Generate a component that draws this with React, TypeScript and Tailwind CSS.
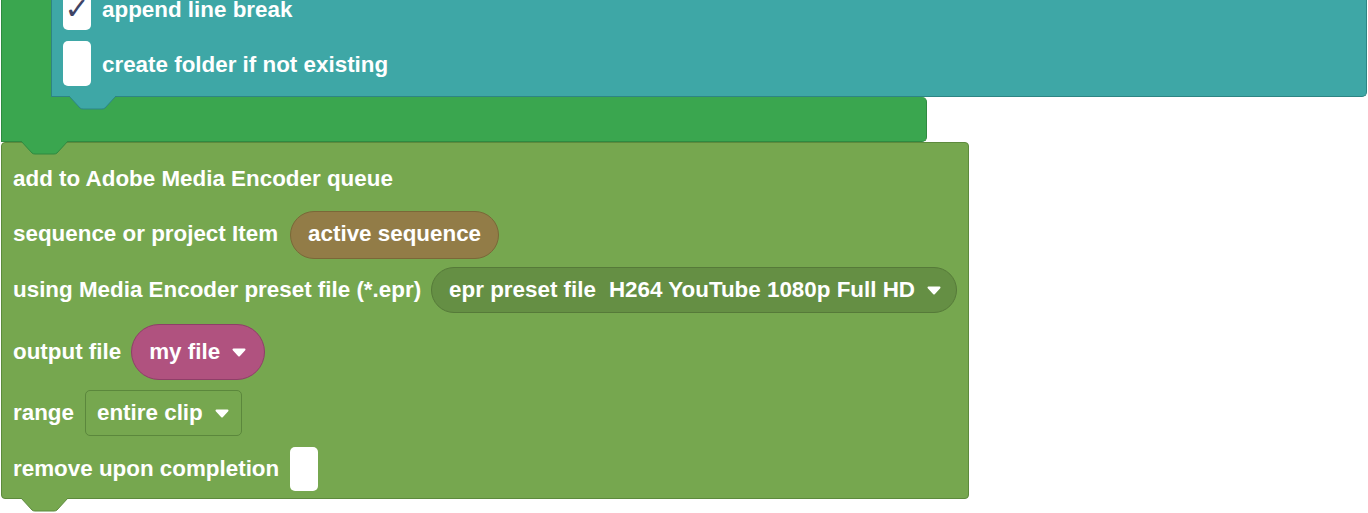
import React from "react";

function Notch({ fill, stroke, className }: { fill: string; stroke: string; className: string }) {
  return (
    <svg width="49" height="14" viewBox="0 0 49 14" className={className}>
      <path d="M0 0 L1 0 L12 12 Q13 13 15 13 L34 13 Q36 13 37 12 L48 0 L49 0 Z" fill={fill} />
      <path d="M1 0 L12 12 Q13 13 15 13 L34 13 Q36 13 37 12 L48 0" fill="none" stroke={stroke} strokeWidth="1" />
    </svg>
  );
}

function Arrow() {
  return (
    <svg width="14" height="9" viewBox="0 0 14 9" className="shrink-0">
      <path d="M1.5 1.5 L12.5 1.5 L7 7.5 Z" fill="#ffffff" stroke="#ffffff" strokeWidth="2" strokeLinejoin="round" />
    </svg>
  );
}

function Checkbox({ checked }: { checked?: boolean }) {
  return (
    <div className="w-[28px] h-[44px] bg-white rounded-[5px] flex items-center justify-center shrink-0">
      {checked && (
        <span className="text-[#3f4466] text-[30px] leading-none font-['DejaVu_Sans',sans-serif] font-bold mt-[2px]">✓</span>
      )}
    </div>
  );
}

export default function App() {
  return (
    <div className="w-[1368px] h-[513px] overflow-hidden bg-white font-['Liberation_Sans',Arial,sans-serif] font-bold text-white text-[22.4px] leading-none">
      <div className="-mt-[25px] flex flex-col items-start pl-[1px]">
        {/* green C-block */}
        <div className="flex flex-col items-start">
          <div className="flex">
            <div className="w-[50px] bg-[#3aa64f] border-l border-[#2f8a41]" />
            <div className="relative w-[1316px] bg-[#3ea7a6] border-l border-r border-b border-[#2d8584] rounded-br-[5px] pt-[11px] pb-[10px] pl-[11px] flex flex-col gap-[11px]">
              <div className="flex items-center gap-[11px]">
                <Checkbox checked />
                <span className="pt-[4px]">append line break</span>
              </div>
              <div className="flex items-center gap-[11px]">
                <div className="w-[28px] h-[45px] bg-white rounded-[5px] shrink-0" />
                <span className="pt-[4px]">create folder if not existing</span>
              </div>
              <Notch fill="#3ea7a6" stroke="#2d8584" className="absolute left-[16px] top-full z-10" />
            </div>
          </div>
          <div className="relative h-[45px] w-[926px] bg-[#3aa64f] border-l border-r border-b border-[#2f8a41] rounded-r-[5px]">
            <Notch fill="#3aa64f" stroke="#2f8a41" className="absolute left-[18px] top-full z-10" />
          </div>
        </div>

        {/* olive block */}
        <div className="relative w-[968px] bg-[#76a74f] border border-[#5d8a3d] rounded-[4px] pt-[8px] pl-[11px] flex flex-col">
          <div className="h-[56px] flex items-center">add to Adobe Media Encoder queue</div>
          <div className="h-[55px] flex items-center gap-[12px]">
            <span>sequence or project Item</span>
            <div className="h-[48px] px-[17px] rounded-full bg-[#927c47] border border-[#7a6838] flex items-center">
              active sequence
            </div>
          </div>
          <div className="h-[56px] flex items-center gap-[10px]">
            <span>using Media Encoder preset file (*.epr)</span>
            <div className="h-[46px] pl-[17px] pr-[15px] rounded-full bg-[#658f44] border border-[#567a39] flex items-center">
              <span>epr preset file</span>
              <span className="ml-[13px]">H264 YouTube 1080p Full HD</span>
              <span className="ml-[12px] flex items-center"><Arrow /></span>
            </div>
          </div>
          <div className="h-[68px] flex items-center gap-[10px]">
            <span>output file</span>
            <div className="h-[56px] pl-[17px] pr-[18px] rounded-full bg-[#b0527f] border border-[#8e3f68] flex items-center gap-[12px]">
              <span>my file</span>
              <Arrow />
            </div>
          </div>
          <div className="h-[54px] flex items-center gap-[11px]">
            <span>range</span>
            <div className="h-[46px] pl-[11px] pr-[12px] rounded-[5px] border border-[#5b873c] flex items-center gap-[12px]">
              <span>entire clip</span>
              <Arrow />
            </div>
          </div>
          <div className="h-[58px] flex items-center gap-[11px]">
            <span>remove upon completion</span>
            <Checkbox />
          </div>
          <Notch fill="#76a74f" stroke="#5d8a3d" className="absolute left-[18px] top-full z-10" />
        </div>
      </div>
    </div>
  );
}
